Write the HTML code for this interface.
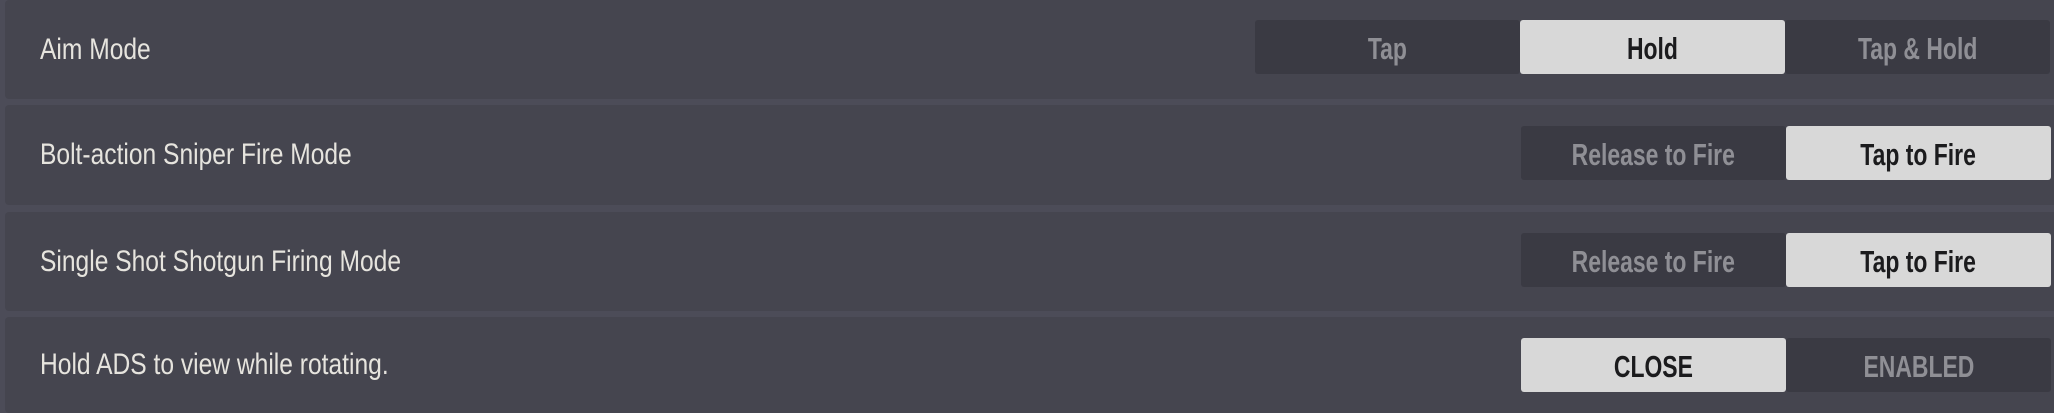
<!DOCTYPE html>
<html><head><meta charset="utf-8"><style>
html,body{margin:0;padding:0;}
body{width:2054px;height:413px;background:#4c4c58;position:relative;overflow:hidden;font-family:"Liberation Sans",sans-serif;}
.row{position:absolute;left:5px;right:0;background:#45454f;border-radius:4px 0 0 4px;}
.lbl{position:absolute;left:35px;top:50%;color:#e6e4de;font-size:30px;white-space:nowrap;transform:translateY(-50%) scaleX(0.82);transform-origin:left center;}
.seg{position:absolute;height:54px;display:flex;}
.b{width:265px;height:54px;box-sizing:border-box;padding-top:4px;background:#3a3a43;color:#8f8f95;font-weight:bold;font-size:31px;display:flex;align-items:center;justify-content:center;border-radius:3px;}
.b span{display:inline-block;transform:scaleX(0.74);white-space:nowrap;}
.b.on{background:#d8d8d8;color:#1b1b1d;}
</style></head><body>
<div class="row" style="top:0;height:99px"><div class="lbl">Aim Mode</div></div>
<div class="row" style="top:105px;height:100px"><div class="lbl">Bolt-action Sniper Fire Mode</div></div>
<div class="row" style="top:212px;height:99px"><div class="lbl">Single Shot Shotgun Firing Mode</div></div>
<div class="row" style="top:317px;height:96px"><div class="lbl">Hold ADS to view while rotating.</div></div>

<div class="seg" style="left:1255px;top:20px"><div class="b"><span>Tap</span></div><div class="b on"><span>Hold</span></div><div class="b"><span>Tap &amp; Hold</span></div></div>
<div class="seg" style="left:1521px;top:126px"><div class="b"><span>Release to Fire</span></div><div class="b on"><span>Tap to Fire</span></div></div>
<div class="seg" style="left:1521px;top:233px"><div class="b"><span>Release to Fire</span></div><div class="b on"><span>Tap to Fire</span></div></div>
<div class="seg" style="left:1521px;top:338px"><div class="b on"><span>CLOSE</span></div><div class="b"><span>ENABLED</span></div></div>
</body></html>
